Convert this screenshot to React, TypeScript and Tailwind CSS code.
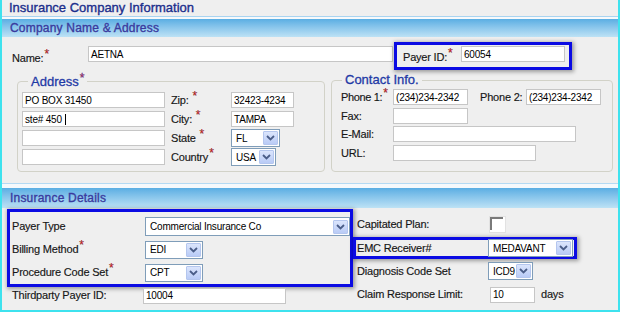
import React from 'react';

const Star = () => (
  <span className="relative -top-[4px] ml-px text-[12px] leading-none text-[#e3191b]">*</span>
);

const TextBox = ({ value = '', className = '', cursor = false }: { value?: string; className?: string; cursor?: boolean }) => (
  <div
    className={`flex h-[16px] items-center border border-[#c6c6c6] bg-white pl-[2px] text-[10px] tracking-[-0.2px] text-black ${className}`}
  >
    <span className="whitespace-pre">{value}</span>
    {cursor && <span className="ml-[3px] h-[11px] w-px bg-black" />}
  </div>
);

const Select = ({ value, className = '' }: { value: string; className?: string }) => (
  <div className={`flex h-[18px] items-center border border-[#7f9db9] bg-white ${className}`}>
    <span className="flex-1 pl-[4px] text-[10px] tracking-[-0.2px] text-black">{value}</span>
    <span className="mr-px flex h-[14px] w-[15px] items-center justify-center rounded-[1px] border border-[#b4c6ee] bg-linear-to-b from-[#dbe5fc] to-[#b9cbf6]">
      <svg width="9" height="6" viewBox="0 0 9 6">
        <path d="M1 1l3.5 3.5L8 1" stroke="#4a5d88" strokeWidth="1.8" fill="none" />
      </svg>
    </span>
  </div>
);

const Label = ({ children, className = '' }: { children: React.ReactNode; className?: string }) => (
  <div className={`whitespace-nowrap text-[11px] tracking-[-0.2px] text-[#161616] [-webkit-text-stroke:0.15px_#161616] ${className}`}>
    {children}
  </div>
);

export default function App() {
  return (
    <div className="h-[312px] w-[620px] overflow-hidden border-x-2 border-b-2 border-[#3ee2ee] bg-[#efefef] font-['Liberation_Sans',Arial,sans-serif]">
      {/* title */}
      <div className="h-[16px] pl-[7px] text-[13px] leading-[16px] text-[#1b2e8c] [-webkit-text-stroke:0.35px_#1b2e8c]">
        Insurance Company Information
      </div>
      <div className="h-[3px] border-t border-[#a9d4f1] bg-[#f7f9fb]" />
      <div className="h-[18px] bg-linear-to-b from-[#5aaee3] to-[#bde2f5] pl-[8px] text-[12px] leading-[18px] tracking-[0.2px] text-[#3a3a9e] [-webkit-text-stroke:0.35px_#3a3a9e]">
        Company Name &amp; Address
      </div>

      {/* name + payer id */}
      <div className="mt-[5px] flex h-[28px]">
        <div className="flex w-[392px] pt-[4px]">
          <Label className="w-[86px] pl-[10px] pt-[4px]">
            Name:<Star />
          </Label>
          <TextBox className="w-[305px]" value="AETNA" />
        </div>
        <div className="flex h-[28px] w-[178px] border-[3px] border-[#0b0be3] shadow-[1px_1px_4px_1px_rgba(0,0,0,0.35)]">
          <Label className="w-[64px] pl-[6px] pt-[4px]">
            Payer ID:<Star />
          </Label>
          <div className="pt-px">
            <TextBox className="w-[104px]" value="60054" />
          </div>
        </div>
      </div>

      {/* fieldsets */}
      <div className="mt-[4px] flex gap-[6px] pl-[15px]">
        <fieldset className="h-[98px] w-[308px] rounded-[4px] border border-[#d2d2c8]">
          <legend className="ml-[10px] px-[3px] text-[13px] leading-[15px] text-[#1f3aa6] [-webkit-text-stroke:0.3px_#1f3aa6]">
            Address<Star />
          </legend>
          <div className="flex pl-[4px] pt-[3px]">
            <div className="flex w-[143px] flex-col gap-[3px]">
              <TextBox value="PO BOX 31450" />
              <TextBox value="ste# 450" cursor />
              <TextBox />
              <TextBox />
            </div>
            <div className="-mt-[1px] ml-[6px] flex w-[60px] flex-col">
              <Label className="h-[19px] leading-[19px]">Zip: <Star /></Label>
              <Label className="h-[19px] leading-[19px]">City: <Star /></Label>
              <Label className="h-[19px] leading-[19px]">State <Star /></Label>
              <Label className="h-[19px] leading-[19px]">Country<Star /></Label>
            </div>
            <div className="flex flex-col">
              <TextBox className="w-[63px]" value="32423-4234" />
              <TextBox className="mt-[3px] w-[63px]" value="TAMPA" />
              <Select className="mt-[2px] w-[49px]" value="FL" />
              <Select className="mt-px w-[45px]" value="USA" />
            </div>
          </div>
        </fieldset>

        <fieldset className="h-[98px] w-[282px] rounded-[4px] border border-[#d2d2c8]">
          <legend className="mb-[3px] ml-[10px] px-[3px] text-[13px] leading-[12px] text-[#1f3aa6] [-webkit-text-stroke:0.3px_#1f3aa6]">
            Contact Info.
          </legend>
          <div className="flex flex-col gap-[2px] pl-[9px]">
            <div className="flex items-center">
              <Label className="w-[52px] tracking-[-0.35px]">
                Phone 1:<Star />
              </Label>
              <TextBox className="w-[75px]" value="(234)234-2342" />
              <Label className="ml-[12px] w-[46px]">Phone 2:</Label>
              <TextBox className="w-[75px]" value="(234)234-2342" />
            </div>
            <div className="flex items-center">
              <Label className="w-[52px]">Fax:</Label>
              <TextBox className="w-[75px]" />
            </div>
            <div className="flex items-center">
              <Label className="w-[52px]">E-Mail:</Label>
              <TextBox className="w-[183px]" />
            </div>
            <div className="flex items-center">
              <Label className="w-[52px]">URL:</Label>
              <TextBox className="w-[143px]" />
            </div>
          </div>
        </fieldset>
      </div>

      {/* insurance details */}
      <div className="mt-[11px] h-[5px] border-t border-[#b4daf3] bg-[#f5f9fc]" />
      <div className="h-[20px] bg-linear-to-b from-[#5aaee3] to-[#bde2f5] pl-[8px] text-[12px] leading-[20px] tracking-[0.2px] text-[#3a3a9e] [-webkit-text-stroke:0.35px_#3a3a9e]">
        Insurance Details
      </div>

      <div className="mt-px flex pl-[5px]">
        <div className="flex w-[346px] flex-col">
          <div className="flex h-[78px] flex-col border-[3px] border-[#0b0be3] pt-[3px] shadow-[1px_1px_4px_1px_rgba(0,0,0,0.35)]">
            <div className="flex h-[23px] items-center pl-[2px]">
              <Label className="w-[133px]">Payer Type</Label>
              <Select className="h-[19px] w-[205px]" value="Commercial Insurance Co" />
            </div>
            <div className="flex h-[23px] items-center pl-[2px]">
              <Label className="w-[133px]">
                Billing Method<Star />
              </Label>
              <Select className="w-[58px]" value="EDI" />
            </div>
            <div className="flex h-[23px] items-center pl-[2px]">
              <Label className="w-[133px]">
                Procedure Code Set<Star />
              </Label>
              <Select className="w-[58px]" value="CPT" />
            </div>
          </div>
          <div className="flex h-[17px] items-center pl-[5px]">
            <Label className="w-[131px]">Thirdparty Payer ID:</Label>
            <TextBox className="w-[143px]" value="10004" />
          </div>
        </div>

        <div className="flex flex-col">
          <div className="flex h-[28px] items-center pl-[4px] pt-[3px]">
            <Label className="w-[132px]">Capitated Plan:</Label>
            <div className="h-[17px] w-[17px] border border-[#e2e2e2] bg-white">
              <div className="h-[13px] w-[13px] border-l-2 border-t-2 border-[#7a7a7a]" />
            </div>
          </div>
          <div className="flex h-[22px] w-[224px] items-center border-[3px] border-[#0b0be3] pl-px shadow-[1px_1px_4px_1px_rgba(0,0,0,0.35)]">
            <Label className="w-[131px]">EMC Receiver#</Label>
            <Select className="w-[85px]" value="MEDAVANT" />
          </div>
          <div className="flex h-[24px] items-center pl-[4px]">
            <Label className="w-[131px]">Diagnosis Code Set</Label>
            <Select className="w-[45px]" value="ICD9" />
          </div>
          <div className="flex h-[23px] items-center pl-[4px]">
            <Label className="w-[133px]">Claim Response Limit:</Label>
            <TextBox className="w-[45px]" value="10" />
            <Label className="ml-[6px]">days</Label>
          </div>
        </div>
      </div>
    </div>
  );
}
